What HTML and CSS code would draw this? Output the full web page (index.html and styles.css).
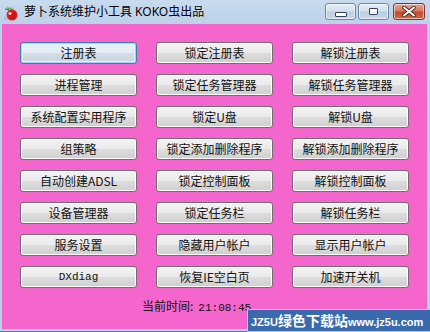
FILE: index.html
```html
<!DOCTYPE html>
<html lang="zh-CN">
<head>
    <meta charset="UTF-8">
    <title>萝卜系统维护小工具 KOKO虫出品</title>
    <link rel="stylesheet" href="styles.css">
</head>
<body>
    <div class="window">
        <!-- Title bar -->
        <div class="titlebar">
            <svg class="app-icon" width="16" height="16" viewBox="0 0 16 16">
                <path d="M3 2 L6 5 L4 1 L7 4 L8 1 L8.5 5 L11 2 L9.5 6 Z" fill="#3f9a3a"/>
                <path d="M2 4 C4 4 6 5 7 6" stroke="#2e7a2a" stroke-width="1.2" fill="none"/>
                <circle cx="9" cy="10" r="5.5" fill="#e0262c"/>
                <circle cx="9.5" cy="10.5" r="4" fill="#c8161e"/>
                <ellipse cx="7" cy="8.5" rx="1.6" ry="1.2" fill="#ffffff" opacity="0.9"/>
                <path d="M1 14 L3 12 M2 15 L4 14" stroke="#9a9a9a" stroke-width="0.8"/>
            </svg>
            <span class="title-text">萝卜系统维护小工具 KOKO虫出品</span>
            <div class="caption-buttons">
                <div class="cap-btn cap-min"><span class="min-glyph"></span></div>
                <div class="cap-btn cap-max"><span class="max-glyph"></span></div>
                <div class="cap-btn cap-close">
                    <svg width="14" height="11" viewBox="0 0 14 11">
                        <path d="M2 1.5 L12 9.5 M12 1.5 L2 9.5" stroke="#4a2018" stroke-width="3.6" stroke-linecap="round"/>
                        <path d="M2 1.5 L12 9.5 M12 1.5 L2 9.5" stroke="#ffffff" stroke-width="2" stroke-linecap="round"/>
                    </svg>
                </div>
            </div>
        </div>

        <!-- Client area -->
        <div class="client">
            <div class="button-grid">
                <button class="btn focused">注册表</button>
                <button class="btn">锁定注册表</button>
                <button class="btn">解锁注册表</button>

                <button class="btn">进程管理</button>
                <button class="btn">锁定任务管理器</button>
                <button class="btn">解锁任务管理器</button>

                <button class="btn">系统配置实用程序</button>
                <button class="btn">锁定U盘</button>
                <button class="btn">解锁U盘</button>

                <button class="btn">组策略</button>
                <button class="btn">锁定添加删除程序</button>
                <button class="btn">解锁添加删除程序</button>

                <button class="btn">自动创建ADSL</button>
                <button class="btn">锁定控制面板</button>
                <button class="btn">解锁控制面板</button>

                <button class="btn">设备管理器</button>
                <button class="btn">锁定任务栏</button>
                <button class="btn">解锁任务栏</button>

                <button class="btn">服务设置</button>
                <button class="btn">隐藏用户帐户</button>
                <button class="btn">显示用户帐户</button>

                <button class="btn mono">DXdiag</button>
                <button class="btn">恢复IE空白页</button>
                <button class="btn">加速开关机</button>
            </div>

            <div class="clock-row">
                <span class="clock-label">当前时间:</span><span class="clock-time">21:08:45</span>
            </div>
        </div>
    </div>

    <!-- Watermark overlay -->
    <div class="watermark"><span class="wm-latin">JZ5U</span>绿色下载站<span class="wm-latin">www.jz5u.com</span></div>
</body>
</html>
```

FILE: styles.css
```css
/* Window frame */
body {
    margin: 0;
    padding: 0;
    width: 430px;
    height: 332px;
    overflow: hidden;
    position: relative;
    font-family: "Liberation Sans", "Noto Sans CJK SC", sans-serif;
}
.window {
    width: 430px;
    height: 332px;
    display: flex;
    flex-direction: column;
    background: linear-gradient(to bottom, #c8daee 0px, #bcd2ea 24px, #b9d0e9 100%);
    box-sizing: border-box;
    border-bottom: 1px solid #5c7a99;
}

/* Title bar */
.titlebar {
    height: 24px;
    display: flex;
    align-items: center;
    padding-left: 3px;
    position: relative;
}
.app-icon {
    margin-top: 1px;
}
.title-text {
    margin-left: 5px;
    font-family: "Noto Sans", "Noto Sans CJK SC", sans-serif;
    font-size: 12px;
    color: #000;
    line-height: 16px;
}
.caption-buttons {
    position: absolute;
    top: 3px;
    right: 5px;
    display: flex;
    gap: 2px;
}
.cap-btn {
    height: 17px;
    box-sizing: border-box;
    border: 1px solid #6c87a6;
    border-radius: 3px;
    display: flex;
    align-items: center;
    justify-content: center;
    box-shadow: inset 0 0 0 1px rgba(255, 255, 255, 0.55);
}
.cap-min, .cap-max {
    width: 31px;
    background: linear-gradient(to bottom, #e4edf7 0%, #d3e0ee 45%, #bccde1 55%, #c9d9ea 100%);
}
.cap-close {
    width: 32px;
    margin-left: 2px;
    border-color: #7a3a30;
    background: linear-gradient(to bottom, #e8a793 0%, #d9775f 45%, #c24a2f 55%, #d2694a 100%);
}
.min-glyph {
    width: 10px;
    height: 3px;
    margin-top: 5px;
    background: #fff;
    border: 1px solid #34435a;
    border-radius: 1px;
}
.max-glyph {
    width: 7px;
    height: 5px;
    border: 1px solid #34435a;
    box-shadow: inset 0 0 0 1px #fff, inset 0 2px 0 1px #fff;
    background: #d8e3ee;
    border-radius: 1px;
}

/* Client area */
.client {
    flex: 1;
    margin: 0 3px 2px 2px;
    background-color: #f566cc;
    padding: 18px 0 0 18px;
}
.button-grid {
    display: grid;
    grid-template-columns: repeat(3, 117px);
    grid-auto-rows: 22px;
    column-gap: 19px;
    row-gap: 10px;
}
.btn {
    margin: 0;
    padding: 0;
    font-family: "Noto Sans CJK SC", sans-serif;
    font-size: 12px;
    color: #111;
    border: 1px solid #766a74;
    border-radius: 3px;
    background: linear-gradient(to bottom, #f2f2f2 0%, #ebebeb 48%, #dddddd 52%, #cfcfcf 100%);
    box-shadow: inset 0 0 0 1px #fbfbfb;
    line-height: 18px;
}
.btn.focused {
    border-color: #3c7fb1;
    background: linear-gradient(to bottom, #eaf2f8 0%, #e3ecf3 48%, #d3dde6 52%, #c9d4de 100%);
    box-shadow: inset 0 0 0 1px #9fd3f3, inset 0 0 0 2px #e3f2fb;
}
.btn.mono {
    font-family: "Liberation Mono", monospace;
    font-size: 11px;
}

/* Clock */
.clock-row {
    margin-top: 10px;
    padding-left: 122px;
    height: 16px;
    line-height: 16px;
    font-size: 12px;
    color: #111;
}
.clock-label {
    font-family: "Noto Sans CJK SC", sans-serif;
}
.clock-time {
    font-family: "Liberation Mono", monospace;
    font-size: 11px;
    margin-left: 5px;
}

/* Watermark */
.watermark {
    position: absolute;
    left: 247px;
    top: 309px;
    width: 190px;
    height: 23px;
    box-sizing: border-box;
    background: #3a6aae;
    border: 1px solid #b8c4d8;
    color: #fff;
    font-family: "Noto Sans CJK SC", sans-serif;
    font-weight: bold;
    font-size: 14px;
    line-height: 20px;
    padding-left: 3px;
    white-space: nowrap;
}
.wm-latin {
    font-family: "Liberation Sans", sans-serif;
    font-size: 11px;
}
```
